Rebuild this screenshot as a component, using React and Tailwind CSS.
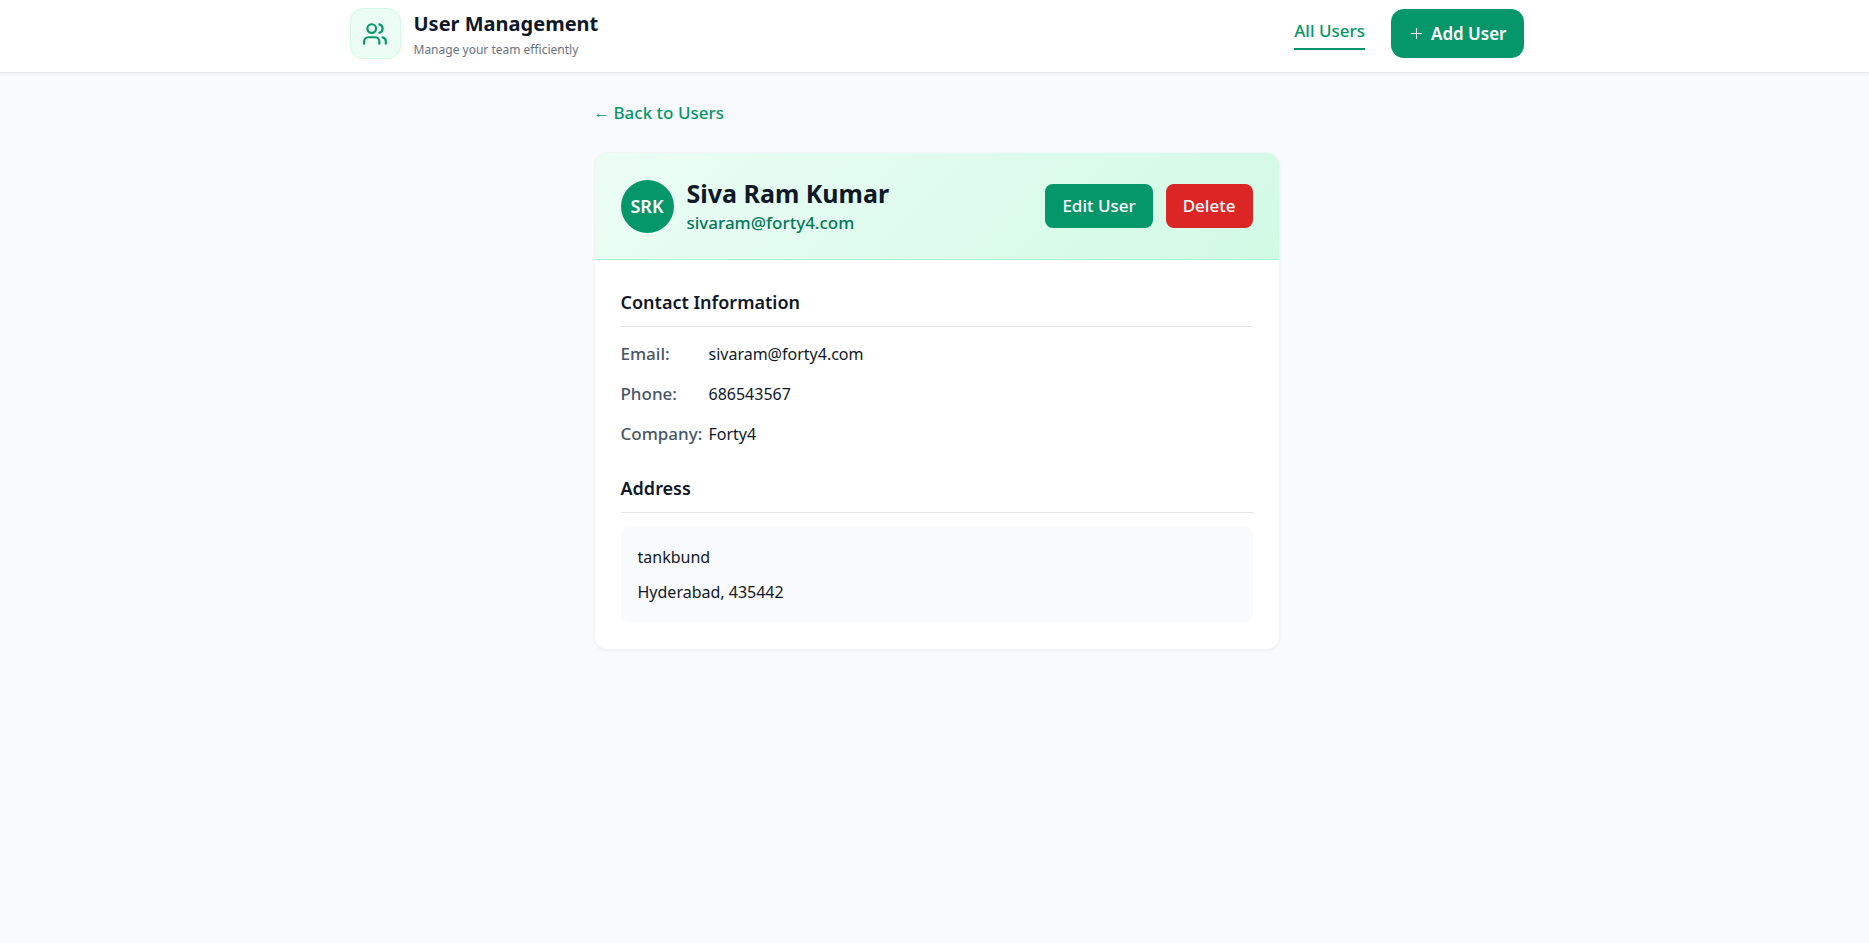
import { Users, Plus } from "lucide-react";

const contact = [
  { label: "Email:", value: "sivaram@forty4.com" },
  { label: "Phone:", value: "686543567" },
  { label: "Company:", value: "Forty4" },
];

function Header() {
  return (
    <header className="border-b border-gray-200 bg-white shadow-xs">
      <div className="mx-auto flex h-18 max-w-[1178px] items-center justify-between pb-[5px] pl-1">
        <div className="flex items-center gap-[13px]">
          <div className="flex size-[51px] items-center justify-center rounded-[13px] border border-emerald-100 bg-emerald-50 text-[#059669]">
            <Users size={26} strokeWidth={2} />
          </div>
          <div className="pt-1">
            <h1 className="text-[20px] leading-7 font-bold text-gray-900">User Management</h1>
            <p className="text-[12px] leading-6 text-gray-500">Manage your team efficiently</p>
          </div>
        </div>
        <nav className="flex items-center gap-[26px]">
          <a href="#users" className="border-b-2 border-[#059669] pb-1 text-[17px] leading-[26px] font-medium text-[#059669]">
            All Users
          </a>
          <button type="button" className="flex h-[49px] items-center gap-[6px] rounded-[13px] bg-[#059669] px-[17px] text-[17px] font-semibold text-white">
            <Plus size={17} strokeWidth={1.5} />
            Add User
          </button>
        </nav>
      </div>
    </header>
  );
}

function SectionTitle({ children }) {
  return (
    <h3 className="mb-[14px] border-b border-gray-200 pb-2 text-[18px] leading-[31px] font-semibold text-gray-900">
      {children}
    </h3>
  );
}

export default function App() {
  return (
    <div className="min-h-screen bg-gray-50 font-['Noto_Sans',sans-serif] text-[16px] leading-[26px] text-gray-900">
      <Header />
      <main className="mx-auto max-w-[690px] pt-[26px] pl-1">
        <a href="#users" className="inline-flex items-center gap-1 text-[17px] font-medium text-[#059669]">
          <span className="font-['Liberation_Sans',sans-serif] text-[16px]">←</span>
          Back to Users
        </a>
        <article className="mt-[26px] overflow-hidden rounded-[13px] border border-gray-100 bg-white shadow-xs">
          <div className="flex items-center justify-between border-b border-emerald-200 bg-[linear-gradient(135deg,#ecfdf5,#d1fae5)] px-[26px] py-[23px]">
            <div className="flex items-center gap-[13px]">
              <div className="flex size-[53px] items-center justify-center rounded-full bg-[#059669] text-[18px] font-semibold text-white">
                SRK
              </div>
              <div>
                <h2 className="text-[25px] leading-[34px] font-bold">Siva Ram Kumar</h2>
                <p className="text-[17px] leading-[26px] font-medium text-[#047857]">sivaram@forty4.com</p>
              </div>
            </div>
            <div className="flex gap-[13px]">
              <button type="button" className="h-11 rounded-lg bg-[#059669] px-[17px] text-[17px] font-medium text-white">
                Edit User
              </button>
              <button type="button" className="h-11 rounded-lg bg-[#dc2626] px-[17px] text-[17px] font-medium text-white">
                Delete
              </button>
            </div>
          </div>
          <div className="flex flex-col gap-[26px] px-[26px] py-[27px]">
            <section>
              <SectionTitle>Contact Information</SectionTitle>
              <dl className="flex flex-col gap-[14px]">
                {contact.map((row) => (
                  <div key={row.label} className="flex">
                    <dt className="w-22 text-[17px] font-medium text-gray-600">{row.label}</dt>
                    <dd>{row.value}</dd>
                  </div>
                ))}
              </dl>
            </section>
            <section>
              <SectionTitle>Address</SectionTitle>
              <address className="flex flex-col gap-[9px] rounded-lg bg-gray-50 p-[17px] not-italic">
                <p>tankbund</p>
                <p>Hyderabad, 435442</p>
              </address>
            </section>
          </div>
        </article>
      </main>
    </div>
  );
}
